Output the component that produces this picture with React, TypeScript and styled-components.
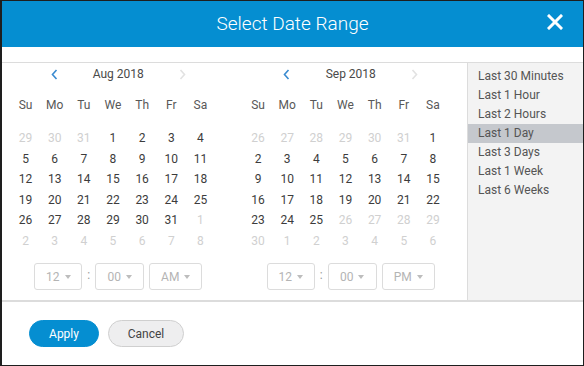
import React from "react";
import styled, { createGlobalStyle } from "styled-components";

const Global = createGlobalStyle`
  html, body { margin: 0; padding: 0; background: #fff; }
  body { font-family: Roboto, "Noto Sans", Arial, sans-serif; }
  * { box-sizing: border-box; }
`;

const BLUE = "#058ed1";

const Dialog = styled.div`
  width: 584px;
  height: 366px;
  border: 1px solid #1e1e1e;
  border-left-width: 2px;
  display: flex;
  flex-direction: column;
  background: #fff;
`;

const Header = styled.div`
  height: 46px;
  flex: none;
  background: ${BLUE};
  display: grid;
  grid-template-columns: 1fr auto 1fr;
  align-items: center;
  padding-bottom: 1px;
`;

const Title = styled.div`
  grid-column: 2;
  color: #fff;
  font-size: 19px;
  font-weight: 300;
`;

const Close = styled.button`
  grid-column: 3;
  justify-self: end;
  margin-right: 19px;
  margin-bottom: 3px;
  width: 18px;
  height: 18px;
  padding: 0;
  border: 0;
  background: transparent;
  display: flex;
  align-items: center;
  justify-content: center;
  cursor: pointer;
`;

const Spacer = styled.div`
  height: 15px;
  flex: none;
  border-bottom: 1px solid #dcdcdc;
  box-sizing: content-box;
`;

const Main = styled.div`
  height: 237px;
  flex: none;
  display: flex;
  border-bottom: 2px solid #dcdcdc;
  box-sizing: content-box;
`;

const Calendars = styled.div`
  width: 465px;
  flex: none;
  display: grid;
  grid-template-columns: 1fr 1fr;
`;

const Pane = styled.div`
  display: flex;
  flex-direction: column;
`;

const MonthHeader = styled.div`
  width: 136px;
  height: 22px;
  margin: 0 auto;
  display: flex;
  align-items: center;
  justify-content: space-between;
  font-size: 12px;
  color: #4a4a4a;
`;

const Arrow = styled.span<{ $enabled?: boolean }>`
  width: 8px;
  display: flex;
  justify-content: center;
  color: ${(p) => (p.$enabled ? "#3a8bd0" : "#e2e2e2")};
`;

const Grid = styled.div`
  margin-left: 9px;
  width: 204px;
  display: grid;
  grid-template-columns: repeat(7, 1fr);
  grid-auto-rows: 20.6px;
  align-items: center;
  justify-items: center;
  font-size: 12px;
`;

const DayNames = styled(Grid)`
  margin-top: 10px;
  margin-bottom: 12.7px;
  grid-auto-rows: 20px;
  color: #585858;
`;

const Day = styled.span<{ $muted?: boolean }>`
  color: ${(p) => (p.$muted ? "#d0d0d0" : "#3c3c3c")};
`;

const TimeRow = styled.div`
  margin-top: 12px;
  display: flex;
  justify-content: center;
  align-items: center;
`;

const Select = styled.div<{ $w: number }>`
  width: ${(p) => p.$w}px;
  height: 27px;
  border: 1px solid #dcdcdc;
  border-radius: 3px;
  display: flex;
  align-items: center;
  justify-content: center;
  gap: 5px;
  font-size: 12px;
  color: #b4b4b4;
  margin-left: 5px;
  &:first-child { margin-left: 0; }
`;

const Caret = styled.span`
  width: 0;
  height: 0;
  border-left: 3.5px solid transparent;
  border-right: 3.5px solid transparent;
  border-top: 4px solid #bdbdbd;
  margin-top: 1px;
`;

const Colon = styled.span`
  font-size: 12px;
  color: #999;
  margin-left: 5px;
  margin-bottom: 3px;
`;

const Sidebar = styled.div`
  flex: 1;
  background: #f3f3f3;
  border-left: 1px solid #dcdcdc;
  padding-top: 4px;
  display: flex;
  flex-direction: column;
`;

const Preset = styled.div<{ $active?: boolean }>`
  height: 19px;
  line-height: 19px;
  padding-left: 10px;
  font-size: 12px;
  color: #555;
  background: ${(p) => (p.$active ? "#c5c8cd" : "transparent")};
`;

const Footer = styled.div`
  flex: 1;
  display: flex;
  gap: 9px;
  padding: 18px 0 0 27px;
  align-items: flex-start;
`;

const Button = styled.button<{ $primary?: boolean }>`
  height: 27px;
  width: ${(p) => (p.$primary ? 70 : 76)}px;
  border-radius: 14px;
  font-family: inherit;
  font-size: 12px;
  padding: 0;
  border: 1px solid ${(p) => (p.$primary ? BLUE : "#cfcfcf")};
  background: ${(p) => (p.$primary ? BLUE : "#eeeeef")};
  color: ${(p) => (p.$primary ? "#fff" : "#444")};
`;

type Cell = { d: number; m?: boolean };

const range = (a: number, b: number, muted = false): Cell[] => {
  const out: Cell[] = [];
  for (let i = a; i <= b; i++) out.push({ d: i, m: muted });
  return out;
};

const aug: Cell[] = [...range(29, 31, true), ...range(1, 31), ...range(1, 8, true)];
const sep: Cell[] = [...range(26, 31, true), ...range(1, 25), ...range(26, 30, true), ...range(1, 6, true)];

const names = ["Su", "Mo", "Tu", "We", "Th", "Fr", "Sa"];

const Chevron = ({ dir }: { dir: "l" | "r" }) => (
  <svg width="7" height="11" viewBox="0 0 7 11">
    <path
      d={dir === "l" ? "M5.5 1 L1.5 5.5 L5.5 10" : "M1.5 1 L5.5 5.5 L1.5 10"}
      fill="none"
      stroke="currentColor"
      strokeWidth="1.6"
    />
  </svg>
);

const Calendar = ({ title, cells, ampm }: { title: string; cells: Cell[]; ampm: string }) => (
  <Pane>
    <MonthHeader>
      <Arrow $enabled>
        <Chevron dir="l" />
      </Arrow>
      <span>{title}</span>
      <Arrow>
        <Chevron dir="r" />
      </Arrow>
    </MonthHeader>
    <DayNames>
      {names.map((n) => (
        <span key={n}>{n}</span>
      ))}
    </DayNames>
    <Grid>
      {cells.map((c, i) => (
        <Day key={i} $muted={c.m}>
          {c.d}
        </Day>
      ))}
    </Grid>
    <TimeRow>
      <Select $w={48}>
        12 <Caret />
      </Select>
      <Colon>:</Colon>
      <Select $w={49}>
        00 <Caret />
      </Select>
      <Select $w={53}>
        {ampm} <Caret />
      </Select>
    </TimeRow>
  </Pane>
);

const presets = [
  "Last 30 Minutes",
  "Last 1 Hour",
  "Last 2 Hours",
  "Last 1 Day",
  "Last 3 Days",
  "Last 1 Week",
  "Last 6 Weeks",
];

export default function App() {
  return (
    <>
      <Global />
      <Dialog>
        <Header>
          <Title>Select Date Range</Title>
          <Close aria-label="Close">
            <svg width="16" height="16" viewBox="0 0 16 16">
              <path d="M2 2 L14 14 M14 2 L2 14" stroke="#fff" strokeWidth="3" strokeLinecap="square" />
            </svg>
          </Close>
        </Header>
        <Spacer />
        <Main>
          <Calendars>
            <Calendar title="Aug 2018" cells={aug} ampm="AM" />
            <Calendar title="Sep 2018" cells={sep} ampm="PM" />
          </Calendars>
          <Sidebar>
            {presets.map((p) => (
              <Preset key={p} $active={p === "Last 1 Day"}>
                {p}
              </Preset>
            ))}
          </Sidebar>
        </Main>
        <Footer>
          <Button $primary>Apply</Button>
          <Button>Cancel</Button>
        </Footer>
      </Dialog>
    </>
  );
}
